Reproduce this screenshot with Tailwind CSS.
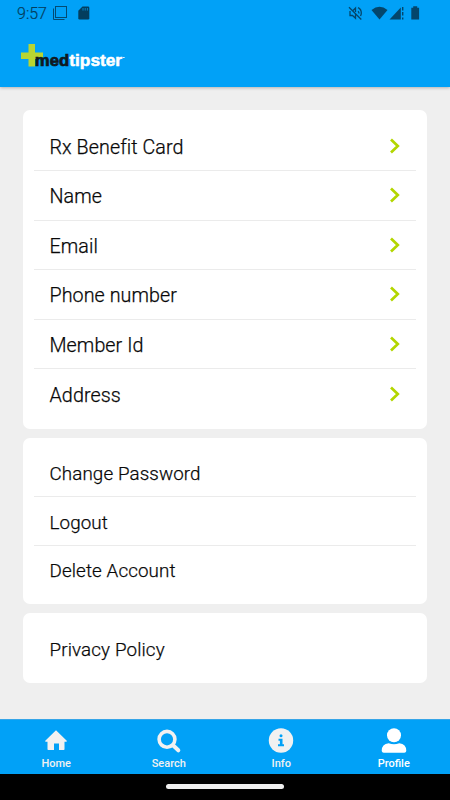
<!DOCTYPE html>
<html lang="en">
<head>
<meta charset="utf-8">
<title>Profile</title>
<script src="https://cdn.jsdelivr.net/npm/@tailwindcss/browser@4"></script>
</head>
<body class="w-[450px] h-[800px] overflow-hidden bg-[#efefef] font-[Roboto,sans-serif] flex flex-col text-[#080808]">
<header class="h-[87px] shrink-0 bg-[#01a1f7] shadow-[0_1px_3px_rgba(0,0,0,0.25)] flex flex-col">
  <div class="h-[27px] flex items-center">
    <span class="ml-[17px] w-[32px] text-[16px] leading-[27px] text-[#033e5e] font-light [-webkit-text-stroke:0.2px]">9:57</span>
    <svg class="ml-[3px]" width="40" height="27" viewBox="52 0 40 27" fill="none" stroke="#034b72">
      <rect x="55.5" y="6.5" width="11" height="11"/><path d="M53.5 8.5V19.5H64.5"/>
      <path d="M82.5 6.5H88Q89.3 6.500 89.300 7.800V18.200Q89.300 19.500 88 19.500H79.600Q78.300 19.500 78.300 18.200V10.700Z" fill="#033e5e" stroke="none"/>
      <path d="M83 8v2.600M85.200 8v2.600M87.400 8v2.600" stroke="#0584c9"/>
    </svg>
    <svg class="ml-auto" width="105" height="27" viewBox="345 0 105 27" fill="#04466b">
      <g fill="none" stroke="#04466b" stroke-width="1.300"><path d="M349 7.200L361.300 19.500M350 11V15.500H352.500L355.500 18.300V14M353 10.500L355.500 8V12M358 11.200Q359 12 359 13.500M358 7.700Q361.300 9.300 361.300 13Q361.300 14.500 360.500 16"/></g>
      <path d="M371.500 10Q379.500 3.500 387.500 10L379.500 19.500Z"/>
      <path d="M389.500 19.500L400.800 7.500V19.500Z"/><path d="M402 7h1.400v3.500H402zM402 12h1.400v3.500H402zM402 17.500h1.400v2H402z"/>
      <path d="M413.200 6.200h4v1.500h1.900V19.500h-7.800V7.700h1.900z"/>
    </svg>
  </div>
  <svg width="150" height="60" viewBox="0 27 150 60">
    <path d="M28.500 44h6.500v8.500h8v6.500h-8v7.500h-6.500v-7.500h-7.500v-6.500h7.500z" fill="#b8d532"/>
    <text x="34.800" y="66.200" textLength="34.300" lengthAdjust="spacingAndGlyphs" font-family="Liberation Sans,sans-serif" font-weight="700" font-size="16" fill="#101820" stroke="#101820" stroke-width=".7">med</text>
    <text x="69.300" y="66.200" textLength="52.800" lengthAdjust="spacingAndGlyphs" font-family="Liberation Sans,sans-serif" font-weight="700" font-size="16" fill="#fff" stroke="#fff" stroke-width=".5">tipster</text>
    <path d="M122.500 57.500h2.200" stroke="#d8f0ff"/>
  </svg>
</header>
<main class="flex-1 px-[23px] pt-[23px] flex flex-col gap-[9.500px]">
  <section class="h-[318.500px] bg-white rounded-[7px] px-[11px] pt-[11.500px] text-[19.700px] font-light tracking-[0.07px] [-webkit-text-stroke:0.25px]">
    <div class="h-[49.500px] pl-[15.500px] pr-[15.500px] flex items-center justify-between border-b border-[#ebebeb]"><span class="pt-[4px]">Rx Benefit Card</span><svg width="12" height="16" viewBox="0 0 12 16" fill="none" stroke="#b3d600" stroke-width="2.700"><path d="M2 1.500L8.800 8L2 14.500"/></svg></div>
    <div class="h-[49.500px] pl-[15.500px] pr-[15.500px] flex items-center justify-between border-b border-[#ebebeb]"><span class="pt-[4px]">Name</span><svg width="12" height="16" viewBox="0 0 12 16" fill="none" stroke="#b3d600" stroke-width="2.700"><path d="M2 1.500L8.800 8L2 14.500"/></svg></div>
    <div class="h-[49.500px] pl-[15.500px] pr-[15.500px] flex items-center justify-between border-b border-[#ebebeb]"><span class="pt-[4px]">Email</span><svg width="12" height="16" viewBox="0 0 12 16" fill="none" stroke="#b3d600" stroke-width="2.700"><path d="M2 1.500L8.800 8L2 14.500"/></svg></div>
    <div class="h-[49.500px] pl-[15.500px] pr-[15.500px] flex items-center justify-between border-b border-[#ebebeb]"><span class="pt-[4px]">Phone number</span><svg width="12" height="16" viewBox="0 0 12 16" fill="none" stroke="#b3d600" stroke-width="2.700"><path d="M2 1.500L8.800 8L2 14.500"/></svg></div>
    <div class="h-[49.500px] pl-[15.500px] pr-[15.500px] flex items-center justify-between border-b border-[#ebebeb]"><span class="pt-[4px]">Member Id</span><svg width="12" height="16" viewBox="0 0 12 16" fill="none" stroke="#b3d600" stroke-width="2.700"><path d="M2 1.500L8.800 8L2 14.500"/></svg></div>
    <div class="h-[49.500px] pl-[15.500px] pr-[15.500px] flex items-center justify-between"><span class="pt-[4px]">Address</span><svg width="12" height="16" viewBox="0 0 12 16" fill="none" stroke="#b3d600" stroke-width="2.700"><path d="M2 1.500L8.800 8L2 14.500"/></svg></div>
  </section>
  <section class="h-[165.500px] bg-white rounded-[7px] px-[11px] pt-[11px] text-[18.800px] font-light tracking-[0.11px] [-webkit-text-stroke:0.25px]">
    <div class="h-[48.300px] pl-[15.500px] pt-[3.500px] flex items-center border-b border-[#ebebeb]">Change Password</div>
    <div class="h-[48.300px] pl-[15.500px] pt-[3.500px] flex items-center border-b border-[#ebebeb]">Logout</div>
    <div class="h-[48.300px] pl-[15.500px] pt-[3px] flex items-center">Delete Account</div>
  </section>
  <section class="h-[69.500px] bg-white rounded-[7px] px-[26.500px] pt-[4px] text-[18.800px] font-light tracking-[0.14px] [-webkit-text-stroke:0.25px] flex items-center">Privacy Policy</section>
</main>
<nav class="h-[55px] shrink-0 bg-[#01a1f7] border-t border-[#35a5e8] grid grid-cols-4 text-[11px] leading-[14px] font-medium text-[#f1f1f1]">
  <a class="flex flex-col items-center pt-[7px]"><svg width="28" height="28" viewBox="0 0 28 28" fill="#f1f1f1"><path d="M14 3.300L25 14Q25 14.700 24 14.700H22.500V22.200Q22.500 23 21.700 23H17V16.500H12V23H6.300Q5.500 23 5.500 22.200V14.700H4Q3 14.700 3 14Z"/></svg><span class="mt-[2px]">Home</span></a>
  <a class="flex flex-col items-center pt-[7px]"><svg width="28" height="28" viewBox="0 0 28 28" fill="none" stroke="#f1f1f1"><circle cx="12" cy="12.300" r="7.900" stroke-width="3.600"/><path d="M18 18.300L23.300 23.300" stroke-width="4" stroke-linecap="round"/></svg><span class="mt-[2px]">Search</span></a>
  <a class="flex flex-col items-center pt-[7px]"><svg width="28" height="28" viewBox="0 0 28 28"><circle cx="14" cy="13.500" r="12.200" fill="#f1f1f1"/><g fill="#01a1f7"><circle cx="14" cy="8.800" r="1.500"/><path d="M11.500 11.800h4v5.500h1.500v2h-6v-2h1.900v-3.500h-1.400z"/></g></svg><span class="mt-[2px]">Info</span></a>
  <a class="flex flex-col items-center pt-[7px] text-white"><svg width="28" height="28" viewBox="0 0 28 28" fill="#fff"><circle cx="14" cy="8.300" r="7"/><path d="M8.700 16.300Q14 18 19.300 16.300Q26.300 16.800 26.300 24Q26 25.800 24.300 25.800H3.700Q2 25.800 1.700 24Q1.700 16.800 8.700 16.300Z"/></svg><span class="mt-[2px]">Profile</span></a>
</nav>
<footer class="h-[26px] shrink-0 bg-black flex justify-center pt-[10px]"><div class="w-[118px] h-[5px] rounded-full bg-[#efefef]"></div></footer>
</body>
</html>
